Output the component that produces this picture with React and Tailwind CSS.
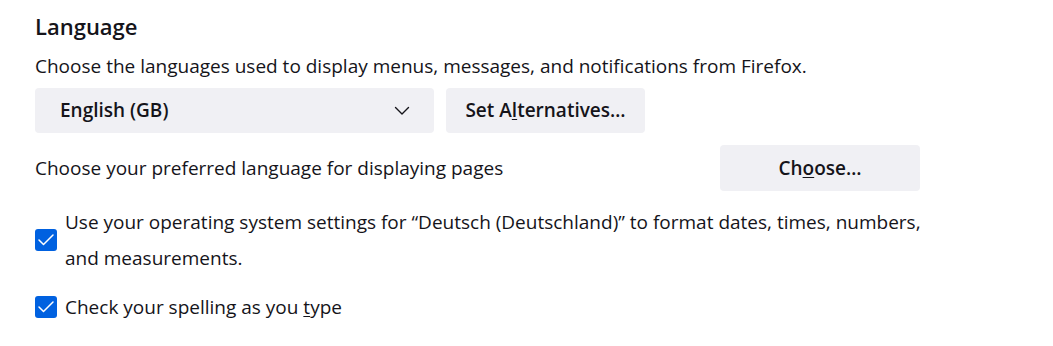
import React from "react";

function Chevron() {
  return (
    <svg width="16" height="10" viewBox="0 0 16 10" fill="none">
      <path d="M1.5 1.5 L8 8 L14.5 1.5" stroke="#15141a" strokeWidth="1.4" strokeLinecap="round" strokeLinejoin="round" />
    </svg>
  );
}

function Check() {
  return (
    <span className="flex h-[22px] w-[22px] shrink-0 items-center justify-center rounded-[3px] bg-[#0061e0]">
      <svg width="18" height="14" viewBox="0 0 18 14" fill="none">
        <path d="M2 7 L6.5 11.5 L16 2" stroke="white" strokeWidth="1.5" strokeLinecap="round" strokeLinejoin="round" />
      </svg>
    </span>
  );
}

export default function App() {
  return (
    <div
      className="h-[346px] w-[1053px] bg-white pl-[35px] pt-[10px] text-[#15141a]"
      style={{ fontFamily: '"Open Sans", "Noto Sans", sans-serif' }}
    >
      <div className="w-[885px]">
        <h2 className="text-[22px] font-semibold leading-[32px]">Language</h2>
        <p className="mt-[8px] text-[19px] leading-[32px]">
          Choose the languages used to display menus, messages, and notifications from Firefox.
        </p>
        <div className="mt-[6px] flex gap-[12px]">
          <div className="flex h-[45px] w-[399px] items-center justify-between rounded-[4px] bg-[#f0f0f4] pl-[25px] pr-[24px] text-[19px] font-semibold">
            <span>English (GB)</span>
            <Chevron />
          </div>
          <div className="flex h-[45px] w-[199px] items-center justify-center rounded-[4px] bg-[#f0f0f4] text-[19px] font-semibold">
            <span>
              Set A<u className="underline-offset-2">l</u>ternatives…
            </span>
          </div>
        </div>
        <div className="mt-[12px] flex items-center justify-between">
          <span className="text-[19px]">Choose your preferred language for displaying pages</span>
          <div className="flex h-[46px] w-[200px] items-center justify-center rounded-[4px] bg-[#f0f0f4] text-[19px] font-semibold">
            <span>
              Ch<u className="underline-offset-2">o</u>ose…
            </span>
          </div>
        </div>
      </div>
      <div className="w-[905px]">
        <div className="mt-[13px] flex items-center gap-[8px]">
          <Check />
          <span className="text-[19px] leading-[36px]">
            Use your operating system settings for “Deutsch (Deutschland)” to format dates, times, numbers, and measurements.
          </span>
        </div>
        <div className="mt-[19px] flex items-center gap-[8px]">
          <Check />
          <span className="text-[19px] leading-[24px]">
            Check your spelling as you <u className="underline-offset-2">t</u>ype
          </span>
        </div>
      </div>
    </div>
  );
}
